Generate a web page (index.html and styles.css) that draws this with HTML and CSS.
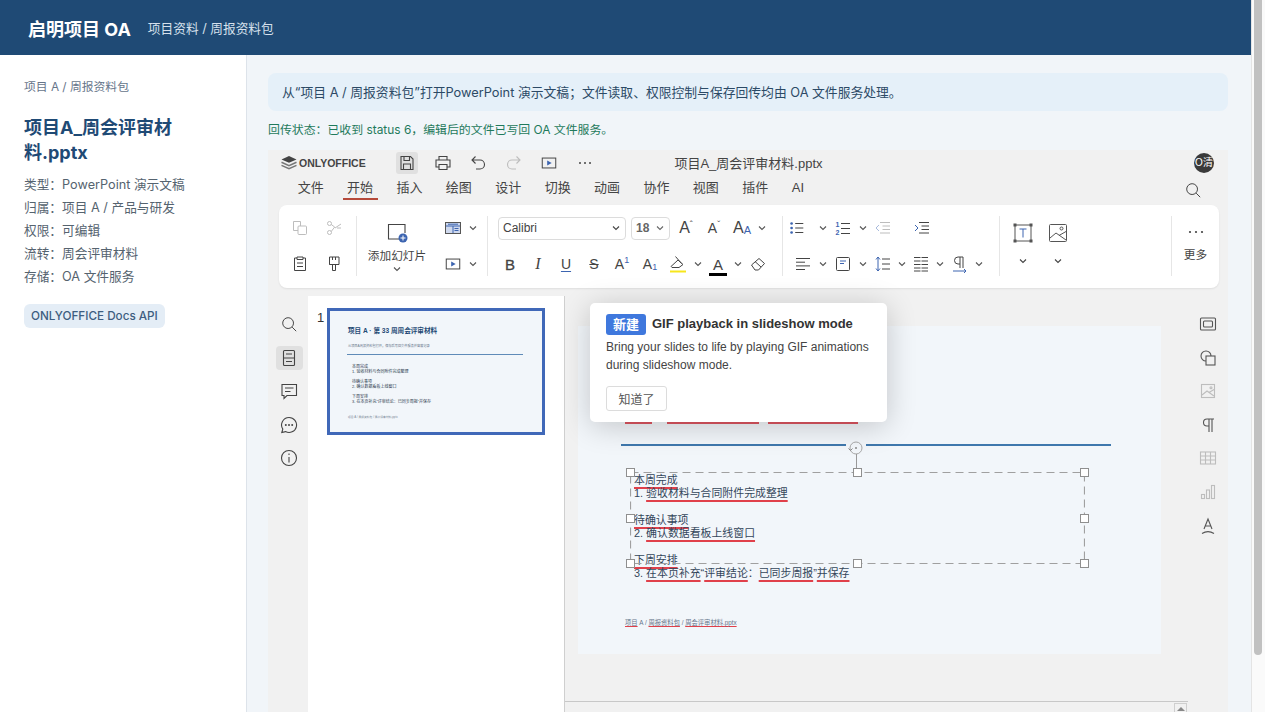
FILE: index.html
```html
<!DOCTYPE html>
<html lang="zh-CN">

<head>
    <meta charset="utf-8">
    <title>启明项目 OA</title>
    <link rel="stylesheet" href="styles.css">
</head>

<body>
    <!-- shared icons -->
    <svg class="defs" width="0" height="0" aria-hidden="true">
        <symbol id="chev" viewBox="0 0 8 8"><path d="M1 2.500l3 3 3-3" fill="none" stroke="currentColor" stroke-width="1.100"/></symbol>
        <symbol id="i-search" viewBox="0 0 20 20"><circle cx="9" cy="9" r="6" fill="none" stroke="currentColor" stroke-width="1.100"/><path d="M13.500 13.500l4.500 4.500" stroke="currentColor" stroke-width="1.100"/></symbol>
        <symbol id="i-play" viewBox="0 0 20 20"><rect x="2.500" y="4.500" width="15" height="11" fill="none" stroke="currentColor" stroke-width="1.100"/><path d="M8 7.200l5 2.800-5 2.800z" fill="#3c64b0"/></symbol>
        <symbol id="i-list" viewBox="0 0 20 20"><path d="M8 5h9M8 10h9M8 15h9" stroke="currentColor" stroke-width="1.100"/><circle cx="4" cy="5" r="1.500" fill="#3c64b0"/><circle cx="4" cy="10" r="1.500" fill="#3c64b0"/><circle cx="4" cy="15" r="1.500" fill="#3c64b0"/></symbol>
    </svg>

    <div class="page">
        <div class="app">
            <header class="topbar">
                <span class="brand">启明项目 OA</span>
                <span class="crumb">项目资料 / 周报资料包</span>
            </header>

            <div class="layout">
                <aside class="sidebar">
                    <div class="side-path">项目 A / 周报资料包</div>
                    <h2 class="side-title">项目A_周会评审材料.pptx</h2>
                    <ul class="side-meta">
                        <li>类型：PowerPoint 演示文稿</li>
                        <li>归属：项目 A / 产品与研发</li>
                        <li>权限：可编辑</li>
                        <li>流转：周会评审材料</li>
                        <li>存储：OA 文件服务</li>
                    </ul>
                    <span class="chip">ONLYOFFICE Docs API</span>
                </aside>

                <main class="main">
                    <div class="notice">从“项目 A / 周报资料包”打开PowerPoint 演示文稿；文件读取、权限控制与保存回传均由 OA 文件服务处理。</div>
                    <div class="save-status">回传状态：已收到 status 6，编辑后的文件已写回 OA 文件服务。</div>

                    <section class="editor">
                        <div class="titlebar">
                            <div class="tb-left">
                                <div class="logo">
                                    <svg width="18" height="16" viewBox="0 0 18 16"><path d="M9 1l7.500 3.400L9 7.800 1.500 4.400z" fill="#444"/><path d="M1.500 7.300L9 10.700l7.500-3.400M1.500 10.400L9 13.800l7.500-3.400" fill="none" stroke="#777" stroke-width="1.500"/></svg>
                                    <span>ONLYOFFICE</span>
                                </div>
                                <div class="quick">
                                    <span class="qbtn active"><svg width="18" height="18" viewBox="0 0 18 18" fill="none" stroke="currentColor" stroke-width="1.100"><path d="M3 2.500h9.500L15 5v10.500H3z"/><path d="M6 2.500v4h5.500v-4M5.500 15.500V10h7v5.500"/></svg></span>
                                    <span class="qbtn"><svg width="18" height="18" viewBox="0 0 18 18" fill="none" stroke="currentColor" stroke-width="1.100"><path d="M5 6V2.500h8V6M5 13H2V6h14v7h-3"/><path d="M5 10.500h8v5H5z"/></svg></span>
                                    <span class="qbtn"><svg width="18" height="18" viewBox="0 0 18 18" fill="none" stroke="currentColor" stroke-width="1.100"><path d="M6.500 2.500L3 6l3.500 3.500M3 6h8a4.500 4.500 0 0 1 0 9H7"/></svg></span>
                                    <span class="qbtn off"><svg width="18" height="18" viewBox="0 0 18 18" fill="none" stroke="currentColor" stroke-width="1.100"><path d="M11.500 2.500L15 6l-3.500 3.500M15 6H7a4.500 4.500 0 0 0 0 9h4"/></svg></span>
                                    <span class="qbtn"><svg width="18" height="18"><use href="#i-play"/></svg></span>
                                    <span class="qbtn"><svg width="18" height="18" viewBox="0 0 18 18" fill="currentColor"><circle cx="4" cy="9" r="1"/><circle cx="9" cy="9" r="1"/><circle cx="14" cy="9" r="1"/></svg></span>
                                </div>
                            </div>
                            <div class="doc-name">项目A_周会评审材料.pptx</div>
                            <div class="tb-right"><span class="avatar">O清</span></div>
                        </div>

                        <nav class="tabs">
                            <span class="tab"><span>文件</span></span>
                            <span class="tab active"><span>开始</span></span>
                            <span class="tab"><span>插入</span></span>
                            <span class="tab"><span>绘图</span></span>
                            <span class="tab"><span>设计</span></span>
                            <span class="tab"><span>切换</span></span>
                            <span class="tab"><span>动画</span></span>
                            <span class="tab"><span>协作</span></span>
                            <span class="tab"><span>视图</span></span>
                            <span class="tab"><span>插件</span></span>
                            <span class="tab tab-ai"><span>AI</span></span>
                            <svg class="tabs-search" width="18" height="18"><use href="#i-search"/></svg>
                        </nav>

                        <div class="toolbar">
                            <div class="tg tg-clip">
                                <div class="tr">
                                    <span class="ti off"><svg width="18" height="18" viewBox="0 0 18 18" fill="none" stroke="currentColor"><path d="M7 11.500H2.500v-9h7V7"/><rect x="7" y="7" width="8.500" height="8.500" rx="1"/></svg></span>
                                    <span class="ti off"><svg width="18" height="18" viewBox="0 0 18 18" fill="none" stroke="currentColor"><circle cx="4.500" cy="4.500" r="2"/><circle cx="4.500" cy="13.500" r="2"/><path d="M6.200 5.500l3.500 2.500-3.500 4.500M10 9l6-4M12 9h4"/></svg></span>
                                </div>
                                <div class="tr">
                                    <span class="ti"><svg width="18" height="18" viewBox="0 0 18 18" fill="none" stroke="currentColor"><path d="M6 3H3.500v12.500h11V3H12"/><path d="M6 2h6v2.500H6zM6 8h6M6 11.500h6"/></svg></span>
                                    <span class="ti"><svg width="18" height="18" viewBox="0 0 18 18" fill="none" stroke="currentColor"><path d="M4.500 2h9.500v7.500H4.500zM7.500 2v3M10.500 2v3M4.500 9.500h3v6h3v-6h3.500"/></svg></span>
                                </div>
                            </div>
                            <i class="tsep"></i>

                            <div class="tg tg-slide">
                                <div class="add-slide">
                                    <svg width="24" height="22" viewBox="0 0 24 22" fill="none"><path d="M14 18H3.500V3.500H20V12" stroke="#444" stroke-width="1.100"/><circle cx="18" cy="17" r="4.500" fill="#3c64b0"/><path d="M15.500 17h5M18 14.500v5" stroke="#fff"/></svg>
                                    <span>添加幻灯片</span>
                                    <svg class="chev" width="8" height="8"><use href="#chev"/></svg>
                                </div>
                                <div class="slide-btns">
                                    <div class="tr">
                                        <span class="ti"><svg width="18" height="18" viewBox="0 0 18 18"><rect x="1.500" y="3.500" width="15" height="11" fill="#cfd9ee" stroke="#555"/><path d="M2 7h14M9 7v7M4 5.200h10M10.500 9.500h4M10.500 11.500h4" stroke="#3c64b0"/></svg></span>
                                        <svg class="chev" width="12" height="8"><use href="#chev"/></svg>
                                    </div>
                                    <div class="tr">
                                        <span class="ti"><svg width="18" height="18"><use href="#i-play"/></svg></span>
                                        <svg class="chev" width="12" height="8"><use href="#chev"/></svg>
                                    </div>
                                </div>
                            </div>
                            <i class="tsep"></i>

                            <div class="tg tg-font">
                                <div class="tr font-row">
                                    <span class="field font-name">Calibri<svg width="8" height="8"><use href="#chev"/></svg></span>
                                    <span class="field font-size">18<svg width="8" height="8"><use href="#chev"/></svg></span>
                                    <span class="ti glyph big">A<sup>ˆ</sup></span>
                                    <span class="ti glyph">A<sup>ˇ</sup></span>
                                    <span class="ti glyph big">A<small>A</small></span>
                                    <svg class="chev" width="12" height="8"><use href="#chev"/></svg>
                                </div>
                                <div class="tr fmt-row">
                                    <span class="ti glyph bold">B</span>
                                    <span class="ti glyph ital">I</span>
                                    <span class="ti glyph under">U</span>
                                    <span class="ti glyph strike">S</span>
                                    <span class="ti glyph">A<sup class="blue">1</sup></span>
                                    <span class="ti glyph">A<sub class="blue">1</sub></span>
                                    <span class="ti"><svg width="20" height="20" viewBox="0 0 20 20" fill="none" stroke="#444"><path d="M7.500 2.500l6 7M3 12.500L10 6l5 4.500-4 3H4z"/><path d="M2 17.500h16" stroke="#f7e61c" stroke-width="2"/></svg></span>
                                    <svg class="chev" width="12" height="8"><use href="#chev"/></svg>
                                    <span class="ti color-a">A</span>
                                    <svg class="chev" width="12" height="8"><use href="#chev"/></svg>
                                    <span class="ti"><svg width="18" height="18" viewBox="0 0 18 18" fill="none" stroke="#444"><path d="M2.500 10L10 3.500l5.500 5-6 6.500H6z"/><path d="M6 6.500l6 5.500"/></svg></span>
                                </div>
                            </div>
                            <i class="tsep"></i>

                            <div class="tg tg-para">
                                <div class="tr">
                                    <span class="ti"><svg width="18" height="18"><use href="#i-list"/></svg></span>
                                    <svg class="chev after-gap" width="12" height="8"><use href="#chev"/></svg>
                                    <span class="ti"><svg width="18" height="18" viewBox="0 0 18 18"><path d="M7 4.500h9M7 9.500h9M7 14.500h9" stroke="#444"/><text x="1.500" y="8" class="mini-num">1</text><text x="1.500" y="16" class="mini-num">2</text></svg></span>
                                    <svg class="chev" width="12" height="8"><use href="#chev"/></svg>
                                    <span class="ti off"><svg width="18" height="18" viewBox="0 0 18 18" fill="none" stroke="currentColor"><path d="M6 3.500h10M8.500 7h7.500M8.500 10.500h7.500M6 14h10"/><path d="M5 6L2 9l3 3" stroke="#a9bbdd"/></svg></span>
                                    <span class="ti indent"><svg width="18" height="18" viewBox="0 0 18 18" fill="none" stroke="currentColor"><path d="M6 3.500h10M8.500 7h7.500M8.500 10.500h7.500M6 14h10"/><path d="M2 6l3 3-3 3" stroke="#3c64b0"/></svg></span>
                                </div>
                                <div class="tr para-row">
                                    <span class="ti"><svg width="18" height="18" viewBox="0 0 18 18" stroke="#444"><path d="M2 3.500h14M2 7.200h9M2 10.900h14M2 14.500h9"/></svg></span>
                                    <svg class="chev" width="12" height="8"><use href="#chev"/></svg>
                                    <span class="ti"><svg width="18" height="18" viewBox="0 0 18 18" fill="none" stroke="#444"><rect x="2.500" y="2.500" width="13" height="13" rx="1"/><path d="M6 6h6M6 8.500h4" stroke="#3c64b0"/></svg></span>
                                    <svg class="chev" width="12" height="8"><use href="#chev"/></svg>
                                    <span class="ti"><svg width="18" height="18" viewBox="0 0 18 18" fill="none" stroke="#444"><path d="M8 4h8M8 9h8M8 14h8"/><path d="M4 2v14M2 4.500L4 2l2 2.500M2 13.500L4 16l2-2.500" stroke="#3c64b0"/></svg></span>
                                    <svg class="chev tight" width="12" height="8"><use href="#chev"/></svg>
                                    <span class="ti tight"><svg width="18" height="18" viewBox="0 0 18 18" stroke="#444"><path d="M2 2.500h14M2 6h14M2 9.500h14M2 13h14M2 16h14"/><path d="M9 1v17" stroke="#fff"/></svg></span>
                                    <svg class="chev tight" width="12" height="8"><use href="#chev"/></svg>
                                    <span class="ti"><svg width="18" height="18" viewBox="0 0 18 18" fill="none" stroke="#444"><path d="M12 2H7a3 3 0 0 0 0 7h2M9 2v11M12 2v11"/><path d="M2 16h13M13 14l2 2-2 2" stroke="#3c64b0"/></svg></span>
                                    <svg class="chev tight" width="12" height="8"><use href="#chev"/></svg>
                                </div>
                            </div>
                            <i class="tsep"></i>

                            <div class="tg tg-insert">
                                <div class="tr insert-icons">
                                    <span class="ti"><svg width="20" height="20" viewBox="0 0 20 20" fill="none" stroke="#555"><rect x="2" y="2" width="16" height="16"/><path d="M6.500 6h7M10 6v8.500" stroke="#3c64b0"/><g fill="#555"><rect x="1" y="1" width="2" height="2"/><rect x="17" y="1" width="2" height="2"/><rect x="1" y="17" width="2" height="2"/><rect x="17" y="17" width="2" height="2"/></g></svg></span>
                                    <span class="ti"><svg width="20" height="20" viewBox="0 0 20 20" fill="none" stroke="#555"><rect x="1.500" y="1.500" width="17" height="17" rx="1"/><path d="M2 15l6-5 10 7M11 12.500l7-4"/><circle cx="13.500" cy="5.500" r="1.500"/></svg></span>
                                </div>
                                <div class="tr insert-chevs">
                                    <span class="ti"><svg width="8" height="8"><use href="#chev"/></svg></span>
                                    <span class="ti"><svg width="8" height="8"><use href="#chev"/></svg></span>
                                </div>
                            </div>
                            <i class="tsep tsep-more"></i>

                            <div class="tg-more">
                                <svg width="18" height="6" viewBox="0 0 18 6" fill="#444"><circle cx="3" cy="3" r="1.100"/><circle cx="9" cy="3" r="1.100"/><circle cx="15" cy="3" r="1.100"/></svg>
                                <span>更多</span>
                            </div>
                        </div>

                        <div class="workspace">
                            <div class="rail rail-left">
                                <span class="rail-btn"><svg width="18" height="18"><use href="#i-search"/></svg></span>
                                <span class="rail-btn active"><svg width="18" height="18" viewBox="0 0 18 18" fill="none" stroke="currentColor" stroke-width="1.100"><rect x="3.500" y="1.500" width="11" height="15" rx="1"/><path d="M3.500 9h11M6 5h6M6 12.500h6"/></svg></span>
                                <span class="rail-btn"><svg width="18" height="18" viewBox="0 0 18 18" fill="none" stroke="currentColor" stroke-width="1.100"><path d="M2 2.500h14.500v11H7l-3 3v-3H2z"/><path d="M5 6h8.500M5 9.500h5.500"/></svg></span>
                                <span class="rail-btn"><svg width="18" height="18" viewBox="0 0 18 18" fill="none" stroke="currentColor" stroke-width="1.100"><path d="M9 1.500a7.500 7.500 0 1 1-3.500 14.100L1.800 16.500l1-3.400A7.500 7.500 0 0 1 9 1.500z"/><g fill="currentColor" stroke="none"><circle cx="5.800" cy="9" r="1"/><circle cx="9" cy="9" r="1"/><circle cx="12.200" cy="9" r="1"/></g></svg></span>
                                <span class="rail-btn"><svg width="18" height="18" viewBox="0 0 18 18" fill="none" stroke="currentColor" stroke-width="1.100"><circle cx="9" cy="9" r="7.500"/><path d="M9 8v5.500M9 4.500v1.500"/></svg></span>
                            </div>

                            <div class="thumbs">
                                <span class="thumb-num">1</span>
                                <div class="thumb">
                                    <div class="thumb-title">项目 A · 第 33 周周会评审材料</div>
                                    <div class="thumb-sub">从项目A周报资料包打开，保存后写回文件服务并留痕记录</div>
                                    <div class="thumb-rule"></div>
                                    <div class="thumb-body">
                                        <p>本周完成<br>1. 验收材料与合同附件完成整理</p>
                                        <p>待确认事项<br>2. 确认数据看板上线窗口</p>
                                        <p>下周安排<br>3. 在本页补充“评审结论：已同步周报”并保存</p>
                                    </div>
                                    <div class="thumb-foot">项目 A / 周报资料包 / 周会评审材料.pptx</div>
                                </div>
                            </div>

                            <div class="canvas">
                                <div class="canvas-area">
                                    <div class="slide">
                                        <!-- only the spell-check marks of the subtitle show below the tip -->
                                        <div class="slide-sub"><i></i><i></i><i></i></div>
                                        <div class="slide-rule"></div>
                                        <div class="slide-body">
                                            <p><u>本周完成</u><br>1. <u>验收材料与合同附件完成整理</u></p>
                                            <p><u>待确认事项</u><br>2. <u>确认数据看板上线窗口</u></p>
                                            <p><u>下周安排</u><br>3. <u>在本页补充</u>“<u>评审结论</u>：<u>已同步周报</u>”<u>并保存</u></p>
                                        </div>
                                        <div class="slide-foot"><u>项目</u> A / <u>周报资料包</u> / <u>周会评审材料.pptx</u></div>

                                        <div class="rotate">
                                            <svg width="20" height="16" viewBox="0 0 20 16" fill="none"><circle cx="10" cy="8" r="6" stroke="#a8a8a8"/><circle cx="10" cy="8" r="1" fill="#888"/><path d="M2.500 8.500l2 2 2-2" stroke="#888"/></svg>
                                        </div>
                                        <div class="selection">
                                            <svg class="sel-line" width="455" height="92"><rect x=".5" y=".5" width="454" height="91" fill="none" stroke="#a0a0a0" stroke-width="1.200" stroke-dasharray="8 5"/></svg>
                                            <i class="h h-tl"></i><i class="h h-tc"></i><i class="h h-tr"></i>
                                            <i class="h h-ml"></i><i class="h h-mr"></i>
                                            <i class="h h-bl"></i><i class="h h-bc"></i><i class="h h-br"></i>
                                        </div>
                                    </div>
                                </div>
                                <div class="hscroll"><span class="hscroll-btn"></span></div>

                                <div class="tip">
                                    <div class="tip-head"><span class="tip-tag">新建</span><strong>GIF playback in slideshow mode</strong></div>
                                    <p>Bring your slides to life by playing GIF animations during slideshow mode.</p>
                                    <button class="tip-btn">知道了</button>
                                </div>
                            </div>

                            <div class="rail rail-right">
                                <span class="rail-btn"><svg width="18" height="18" viewBox="0 0 18 18" fill="none" stroke="currentColor" stroke-width="1.100"><rect x="1.500" y="3" width="15" height="12" rx="1"/><rect x="4.500" y="6" width="9" height="6" rx="1"/></svg></span>
                                <span class="rail-btn"><svg width="18" height="18" viewBox="0 0 18 18" fill="none" stroke="currentColor" stroke-width="1.100"><path d="M7 12A5 5 0 1 1 12 7"/><rect x="7" y="7" width="9" height="9"/></svg></span>
                                <span class="rail-btn off"><svg width="18" height="18" viewBox="0 0 18 18" fill="none" stroke="currentColor" stroke-width="1.100"><rect x="2.500" y="2.500" width="13" height="13"/><path d="M3 13l5-4 7 5M10 10.500l5-3"/><circle cx="12" cy="5.800" r="1"/></svg></span>
                                <span class="rail-btn"><svg width="18" height="18" viewBox="0 0 18 18" fill="none" stroke="currentColor" stroke-width="1.100"><path d="M15 3H8a3.500 3.500 0 0 0 0 7h2M10 3v13M13 3v13"/></svg></span>
                                <span class="rail-btn off"><svg width="18" height="18" viewBox="0 0 18 18" fill="none" stroke="currentColor" stroke-width="1.100"><rect x="1.500" y="3" width="15" height="12"/><path d="M1.500 7h15M1.500 11h15M6.500 3v12M11.500 3v12"/></svg></span>
                                <span class="rail-btn off"><svg width="18" height="18" viewBox="0 0 18 18" fill="none" stroke="currentColor" stroke-width="1.100"><rect x="2.500" y="11.500" width="3" height="4"/><rect x="7.500" y="7" width="3" height="8.500"/><rect x="12.500" y="2.500" width="3" height="13"/></svg></span>
                                <span class="rail-btn"><svg width="18" height="18" viewBox="0 0 18 18" fill="none" stroke="currentColor" stroke-width="1.100"><path d="M5 12L9 2l4 10M6.300 9h5.400M3 16.500c4-2.500 8-2.500 12 0"/></svg></span>
                            </div>
                        </div>
                    </section>
                </main>
            </div>
        </div>

        <div class="page-scroll"><span></span></div>
    </div>
</body>

</html>
```

FILE: styles.css
```css
* {
    box-sizing: border-box;
}

html,
body {
    margin: 0;
    height: 100%;
    overflow: hidden;
}

body {
    font-family: Inter, "Noto Sans CJK SC", sans-serif;
    color: #333;
    background: #f1f5f9;
}

.defs {
    position: absolute;
}

.page {
    display: flex;
    height: 712px;
}

.app {
    flex: 1;
    min-width: 0;
    display: flex;
    flex-direction: column;
}

/* page scrollbar */
.page-scroll {
    width: 14px;
    background: #fafafa;
    border-left: 1px solid #e4e4e4;
    padding-left: 2px;
}

.page-scroll span {
    display: block;
    width: 8px;
    height: 655px;
    background: #c1c1c1;
    border-radius: 0 0 4px 4px;
}

.topbar {
    height: 55px;
    flex: none;
    background: #1f4a75;
    color: #fff;
    display: flex;
    align-items: center;
    gap: 17px;
    padding-left: 28px;
}

.brand {
    font-size: 18px;
    font-weight: 700;
}

.crumb {
    font-size: 12.7px;
    color: #d5e0ec;
}

.layout {
    flex: 1;
    min-height: 0;
    display: flex;
}

/* left column */
.sidebar {
    width: 247px;
    flex: none;
    background: #fff;
    border-right: 1px solid #dde3ea;
    padding: 24px 24px 0;
}

.side-path {
    font-size: 11.8px;
    line-height: 17px;
    color: #66758a;
}

.side-title {
    margin: 19px 0 8px;
    font-size: 18px;
    line-height: 25px;
    font-weight: 700;
    color: #1f4a75;
}

.side-meta {
    list-style: none;
    margin: 0 0 16px;
    padding: 0;
    font-size: 12.7px;
    line-height: 23px;
    color: #55636f;
}

.chip {
    display: inline-block;
    height: 24px;
    line-height: 24px;
    padding: 0 7px;
    font-size: 11.7px;
    font-weight: 500;
    color: #3d5d80;
    background: #e4edf6;
    border-radius: 6px;
}

.main {
    flex: 1;
    min-width: 0;
    display: flex;
    flex-direction: column;
    padding: 18px 23px 0 21px;
}

.notice {
    height: 38px;
    flex: none;
    line-height: 39px;
    padding-left: 14px;
    font-size: 12.8px;
    color: #2c4a66;
    background: #e5f0f9;
    border-radius: 8px;
}

.save-status {
    flex: none;
    margin: 10px 0 12px;
    font-size: 11.9px;
    line-height: 17px;
    color: #1f7a5c;
}

/* editor */
.editor {
    flex: 1;
    min-height: 0;
    display: flex;
    flex-direction: column;
    background: #f1f1f1;
    font-family: "Liberation Sans", "Noto Sans CJK SC", sans-serif;
    color: #444;
}

.titlebar {
    height: 26px;
    flex: none;
    display: grid;
    grid-template-columns: 1fr auto 1fr;
    align-items: center;
    padding: 0 14px 0 12px;
}

.tb-left {
    display: flex;
    align-items: center;
}

.logo {
    width: 116px;
    display: flex;
    align-items: center;
    gap: 1px;
    font-size: 10.5px;
    font-weight: 700;
    color: #444;
}

.quick {
    display: flex;
    gap: 13.5px;
}

.qbtn {
    width: 22px;
    height: 22px;
    display: flex;
    align-items: center;
    justify-content: center;
    border-radius: 3px;
}

.qbtn.active {
    background: #e0e0e0;
}

.qbtn.off,
.ti.off,
.rail-btn.off {
    color: #bdbdbd;
}

.doc-name {
    margin: 1px 0 0 3px;
    font-size: 13px;
    line-height: 18px;
}

.tb-right {
    display: flex;
    justify-content: flex-end;
}

.avatar {
    width: 20px;
    height: 20px;
    border-radius: 50%;
    background: #3a3a3a;
    color: #fff;
    font-size: 10px;
    line-height: 20px;
    text-align: center;
    white-space: nowrap;
    overflow: hidden;
}

.tabs {
    height: 29px;
    flex: none;
    display: flex;
    padding-left: 18px;
}

.tab {
    width: 49.400px;
    text-align: center;
    font-size: 13px;
}

.tab span {
    display: inline-block;
    width: 35px;
    height: 24px;
    line-height: 24px;
}

.tab.active span {
    border-bottom: 2px solid #b5493a;
}

.tab-ai {
    width: 36px;
}

.tabs-search {
    margin: 5px 26px 0 auto;
}

.toolbar {
    height: 83px;
    flex: none;
    margin: 0 9px 8px 11px;
    display: flex;
    background: #fff;
    border-radius: 8px;
    box-shadow: 0 1px 2px rgba(0, 0, 0, .08);
}

.tsep {
    width: 1px;
    height: 60px;
    margin-top: 11px;
    flex: none;
    background: #e6e6e6;
}

.tg {
    display: flex;
    flex-direction: column;
    gap: 12px;
    padding-top: 11px;
}

.tr {
    height: 24px;
    display: flex;
    align-items: center;
}

.ti {
    width: 28px;
    height: 24px;
    flex: none;
    display: flex;
    align-items: center;
    justify-content: center;
}

.chev {
    flex: none;
    color: #555;
}

.tg-clip {
    width: 77px;
    padding-left: 7px;
}

.tg-clip .tr {
    gap: 6px;
}

.tg-slide {
    width: 130px;
    flex-direction: row;
    gap: 2px;
    padding-top: 0;
}

.add-slide {
    width: 80px;
    padding-top: 16px;
    display: flex;
    flex-direction: column;
    align-items: center;
    font-size: 11.7px;
    line-height: 16px;
}

.add-slide span {
    margin-top: 5px;
}

.add-slide .chev {
    margin-top: 1px;
}

.slide-btns {
    display: flex;
    flex-direction: column;
    gap: 12px;
    padding-top: 11px;
}

.tg-font {
    width: 294px;
    padding-left: 10px;
}

.font-row {
    gap: 0;
}

.field {
    height: 23px;
    display: flex;
    align-items: center;
    justify-content: space-between;
    padding: 0 5px 0 4px;
    font-size: 12px;
    background: #fff;
    border: 1px solid #dcdcdc;
    border-radius: 4px;
}

.font-name {
    width: 128px;
    margin-right: 5px;
}

.font-size {
    width: 39px;
    margin-right: 2px;
    font-weight: 700;
    color: #666;
}

.glyph {
    font-size: 14px;
    color: #444;
}

.glyph.big {
    font-size: 16px;
}

.glyph sup,
.glyph sub,
.glyph small {
    font-size: 9px;
    line-height: 1;
    color: #555;
}

.glyph sup {
    align-self: flex-start;
    margin-top: 4px;
}

.glyph sub {
    align-self: flex-end;
    margin-bottom: 4px;
}

.glyph small {
    font-size: 11px;
    margin-top: 4px;
    color: #3c64b0;
}

.glyph .blue {
    color: #3c64b0;
}

.fmt-row {
    margin-left: -2px;
}

.bold {
    font-size: 15px;
    -webkit-text-stroke: .3px #444;
}

.ital {
    font-family: "Liberation Serif", serif;
    font-style: italic;
    font-size: 16px;
}

.under {
    text-decoration: underline;
    text-decoration-color: #3c64b0;
    text-underline-offset: 2px;
}

.strike {
    text-decoration: line-through;
}

.color-a {
    font-size: 15px;
    position: relative;
}

/* colour bar under the A */
.color-a::after {
    content: "";
    position: absolute;
    left: 5px;
    right: 5px;
    bottom: 0;
    height: 3px;
    background: #000;
}

.tg-para {
    width: 216px;
}

.after-gap {
    margin-left: 6px;
}

.indent {
    margin-left: 11px;
}

.para-row {
    padding-left: 6px;
}

.tight {
    margin-left: -1px;
}

.mini-num {
    font-family: "Liberation Sans", sans-serif;
    font-size: 7px;
    font-weight: 700;
    fill: #3c64b0;
}

.tg-insert {
    width: 171px;
    padding-left: 9px;
}

.tg-insert .tr {
    gap: 7px;
}

.insert-icons {
    margin-top: 5px;
    margin-bottom: -5px;
}

.insert-chevs {
    margin-top: -3px;
}

.tg-more {
    flex: 1;
    display: flex;
    flex-direction: column;
    align-items: center;
    padding-top: 24px;
    font-size: 11.7px;
    line-height: 16px;
}

.tg-more span {
    margin-top: 12px;
}

.workspace {
    flex: 1;
    min-height: 0;
    display: flex;
}

.rail {
    width: 40px;
    flex: none;
    display: flex;
    flex-direction: column;
    align-items: center;
    gap: 9.600px;
    padding-top: 16px;
}

.rail-left {
    padding-left: 2px;
}

.rail-right {
    color: #555;
}

.rail-btn {
    width: 27px;
    height: 24px;
    display: flex;
    align-items: center;
    justify-content: center;
    border-radius: 4px;
}

.rail-btn.active {
    background: #e0e0e0;
}

/* slide list */
.thumbs {
    width: 257px;
    flex: none;
    display: flex;
    align-items: flex-start;
    padding: 12px 0 0 9px;
    background: #fff;
    border-right: 1px solid #cfcfcf;
}

.thumb-num {
    width: 10px;
    font-size: 13px;
    line-height: 20px;
    color: #333;
}

.thumb {
    width: 218px;
    height: 127px;
    padding: 14px 0 0 18px;
    background: #f2f6fa;
    border: 3px solid #4068b8;
    color: #2c3b4e;
}

.thumb-title {
    font-size: 6.600px;
    line-height: 12px;
    font-weight: 700;
    color: #1f4a75;
}

.thumb-sub {
    margin-top: 6px;
    font-size: 3.200px;
    line-height: 6px;
    color: #66758a;
}

.thumb-rule {
    width: 176px;
    height: 1px;
    margin: 5px 0 0 -1px;
    background: #5f8bb8;
}

.thumb-body {
    margin: 9px 0 0 4px;
    font-size: 4px;
    line-height: 5px;
}

.thumb-body p {
    margin: 0 0 5px;
}

.thumb-foot {
    margin-top: 11px;
    font-size: 2.800px;
    line-height: 5px;
    color: #7a8797;
}

/* slide area */
.canvas {
    flex: 1;
    min-width: 0;
    position: relative;
    display: flex;
    flex-direction: column;
}

.canvas-area {
    flex: 1;
    min-height: 0;
    padding: 30px 0 0 13px;
}

.slide {
    width: 583px;
    height: 328px;
    position: relative;
    padding: 96px 0 0 47px;
    background: #f2f6fa;
    color: #34465a;
}

.slide u {
    text-decoration: underline;
    text-decoration-color: #e0404a;
    text-decoration-thickness: 1.500px;
    text-underline-offset: 3px;
}

.slide-sub {
    display: flex;
}

.slide-sub i {
    height: 2px;
    background: #dc5560;
}

.slide-sub i:nth-child(1) {
    width: 27px;
}

.slide-sub i:nth-child(2) {
    width: 92px;
    margin: 0 9px 0 15px;
}

.slide-sub i:nth-child(3) {
    width: 90px;
}

.slide-rule {
    width: 490px;
    height: 2px;
    margin: 20px 0 0 -4px;
    background: #3f78ad;
}

.slide-body {
    margin: 28px 0 0 9px;
    font-size: 10.900px;
    line-height: 13px;
}

.slide-body p {
    margin: 0 0 14px;
}

.slide-foot {
    margin-top: 38px;
    font-size: 6.300px;
    line-height: 10px;
    color: #66758a;
}

.slide-foot u {
    text-decoration-thickness: 1px;
    text-underline-offset: 1px;
}

.rotate {
    position: absolute;
    left: 268px;
    top: 114px;
    width: 20px;
    height: 32px;
}

.rotate svg {
    display: block;
    background: #f2f6fa;
}

.rotate::after {
    content: "";
    position: absolute;
    left: 10px;
    top: 14px;
    width: 1px;
    height: 18px;
    background: #999;
}

.selection {
    position: absolute;
    left: 52px;
    top: 146px;
    width: 455px;
    height: 92px;
}

.sel-line {
    display: block;
}

.h {
    position: absolute;
    width: 9px;
    height: 9px;
    background: #fff;
    border: 1px solid #8f8f8f;
}

.h-tl { left: -4px; top: -4px; }
.h-tc { left: 223px; top: -4px; }
.h-tr { right: -4px; top: -4px; }
.h-ml { left: -4px; top: 42px; }
.h-mr { right: -4px; top: 42px; }
.h-bl { left: -4px; bottom: -4px; }
.h-bc { left: 223px; bottom: -4px; }
.h-br { right: -4px; bottom: -4px; }

.hscroll {
    height: 11px;
    flex: none;
    display: flex;
    justify-content: flex-end;
    border-top: 1px solid #c8c8c8;
}

.hscroll-btn {
    width: 13px;
    height: 10px;
    margin: 1px 1px 0 0;
    border: 1px solid #cfcfcf;
    border-bottom: 0;
    position: relative;
}

.hscroll-btn::after {
    content: "";
    position: absolute;
    left: 2px;
    top: 3px;
    border: 4px solid transparent;
    border-top: 0;
    border-bottom: 4px solid #888;
}

/* new feature tip */
.tip {
    position: absolute;
    left: 25px;
    top: 7px;
    width: 297px;
    height: 119px;
    padding: 11px 16px 0;
    background: #fff;
    border-radius: 5px;
    box-shadow: 0 4px 30px rgba(0, 0, 0, .2);
}

.tip-head {
    display: flex;
    align-items: center;
    gap: 6px;
    font-size: 13px;
    color: #333;
}

.tip-head strong {
    margin-top: -2px;
}

.tip-tag {
    width: 40px;
    height: 21px;
    line-height: 21px;
    text-align: center;
    color: #fff;
    font-weight: 700;
    background: #3f78dd;
    border-radius: 3px;
}

.tip p {
    margin: 3px 0 0;
    font-size: 12px;
    line-height: 18px;
    color: #444;
}

.tip-btn {
    display: block;
    width: 61px;
    height: 25px;
    margin-top: 12px;
    padding: 0;
    font: inherit;
    font-size: 12px;
    color: #555;
    background: #fff;
    border: 1px solid #dcdcdc;
    border-radius: 3px;
}
```
